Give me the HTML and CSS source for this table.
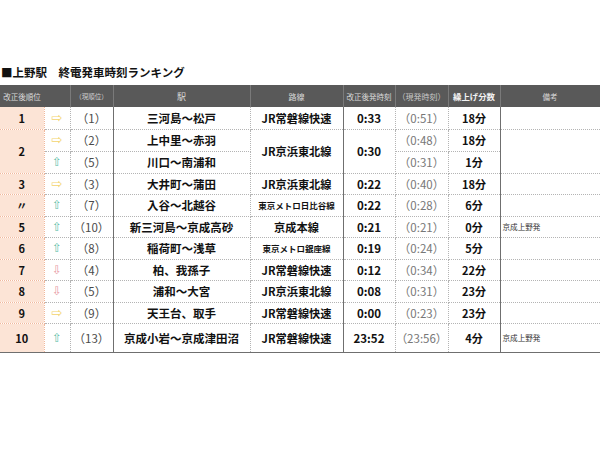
FILE: index.html
```html
<!DOCTYPE html>
<html lang="ja">
<head>
<meta charset="utf-8">
<title>上野駅 終電発車時刻ランキング</title>
<link rel="stylesheet" href="styles.css">
</head>
<body>
<div class="page">
  <h1 class="title">■上野駅　終電発車時刻ランキング</h1>
  <table class="rank">
    <colgroup>
      <col class="c-rank"><col class="c-arrow"><col class="c-prev"><col class="c-sta"><col class="c-line"><col class="c-new"><col class="c-old"><col class="c-diff"><col class="c-note">
    </colgroup>
    <thead>
      <tr>
        <th class="h-rank">改正後順位</th>
        <th class="h-arrow"></th>
        <th class="h-prev sep">（現順位）</th>
        <th class="h-sta">駅</th>
        <th class="h-line sep">路線</th>
        <th class="h-new">改正後発時刻</th>
        <th class="h-old">（現発時刻）</th>
        <th class="h-diff sep">繰上げ分数</th>
        <th class="h-note">備考</th>
      </tr>
    </thead>
    <tbody>
      <tr class="r22">
        <td class="rk">1</td><td class="ar"><span class="a-r">⇨</span></td><td class="pv sep">（1）</td>
        <td class="st">三河島～松戸</td><td class="ln sep">JR常磐線快速</td><td class="nt">0:33</td><td class="ot">（0:51）</td><td class="df sep">18分</td><td class="nb"></td>
      </tr>
      <tr class="r22">
        <td class="rk" rowspan="2">2</td><td class="ar"><span class="a-r">⇨</span></td><td class="pv sep">（2）</td>
        <td class="st">上中里～赤羽</td><td class="ln sep" rowspan="2">JR京浜東北線</td><td class="nt" rowspan="2">0:30</td><td class="ot">（0:48）</td><td class="df sep">18分</td><td class="nb" rowspan="2"></td>
      </tr>
      <tr class="r22">
        <td class="ar"><span class="a-u">⇧</span></td><td class="pv sep">（5）</td>
        <td class="st">川口～南浦和</td><td class="ot">（0:31）</td><td class="df sep">1分</td>
      </tr>
      <tr class="r21">
        <td class="rk">3</td><td class="ar"><span class="a-r">⇨</span></td><td class="pv sep">（3）</td>
        <td class="st">大井町～蒲田</td><td class="ln sep">JR京浜東北線</td><td class="nt">0:22</td><td class="ot">（0:40）</td><td class="df sep">18分</td><td class="nb"></td>
      </tr>
      <tr class="r22">
        <td class="rk">〃</td><td class="ar"><span class="a-u">⇧</span></td><td class="pv sep">（7）</td>
        <td class="st">入谷～北越谷</td><td class="ln sep small">東京メトロ日比谷線</td><td class="nt">0:22</td><td class="ot">（0:28）</td><td class="df sep">6分</td><td class="nb"></td>
      </tr>
      <tr class="r21">
        <td class="rk">5</td><td class="ar"><span class="a-u">⇧</span></td><td class="pv sep">（10）</td>
        <td class="st">新三河島～京成高砂</td><td class="ln sep">京成本線</td><td class="nt">0:21</td><td class="ot">（0:21）</td><td class="df sep">0分</td><td class="nb">京成上野発</td>
      </tr>
      <tr class="r22">
        <td class="rk">6</td><td class="ar"><span class="a-u">⇧</span></td><td class="pv sep">（8）</td>
        <td class="st">稲荷町～浅草</td><td class="ln sep small">東京メトロ銀座線</td><td class="nt">0:19</td><td class="ot">（0:24）</td><td class="df sep">5分</td><td class="nb"></td>
      </tr>
      <tr class="r21">
        <td class="rk">7</td><td class="ar"><span class="a-d">⇩</span></td><td class="pv sep">（4）</td>
        <td class="st">柏、我孫子</td><td class="ln sep">JR常磐線快速</td><td class="nt">0:12</td><td class="ot">（0:34）</td><td class="df sep">22分</td><td class="nb"></td>
      </tr>
      <tr class="r22">
        <td class="rk">8</td><td class="ar"><span class="a-d">⇩</span></td><td class="pv sep">（5）</td>
        <td class="st">浦和～大宮</td><td class="ln sep">JR京浜東北線</td><td class="nt">0:08</td><td class="ot">（0:31）</td><td class="df sep">23分</td><td class="nb"></td>
      </tr>
      <tr class="r21">
        <td class="rk">9</td><td class="ar"><span class="a-r">⇨</span></td><td class="pv sep">（9）</td>
        <td class="st">天王台、取手</td><td class="ln sep">JR常磐線快速</td><td class="nt">0:00</td><td class="ot">（0:23）</td><td class="df sep">23分</td><td class="nb"></td>
      </tr>
      <tr class="r29 last">
        <td class="rk">10</td><td class="ar"><span class="a-u">⇧</span></td><td class="pv sep">（13）</td>
        <td class="st">京成小岩～京成津田沼</td><td class="ln sep">JR常磐線快速</td><td class="nt">23:52</td><td class="ot">（23:56）</td><td class="df sep">4分</td><td class="nb">京成上野発</td>
      </tr>
    </tbody>
  </table>
</div>
</body>
</html>
```
FILE: styles.css
```css
html, body {
  margin: 0;
  padding: 0;
  background: #ffffff;
}
body {
  font-family: "Noto Sans CJK JP", "Noto Sans", sans-serif;
  color: #111;
}
.page {
  width: 600px;
  height: 450px;
  padding-top: 64px;
  box-sizing: border-box;
}
.title {
  margin: 0 0 4px 1px;
  font-size: 11.5px;
  line-height: 17px;
  font-weight: 700;
  color: #111;
  white-space: nowrap;
}
.rank {
  width: 600px;
  border-collapse: collapse;
  table-layout: fixed;
}
.c-rank { width: 44px; }
.c-arrow { width: 26px; }
.c-prev { width: 43px; }
.c-sta { width: 137px; }
.c-line { width: 93px; }
.c-new { width: 52px; }
.c-old { width: 53px; }
.c-diff { width: 52px; }
.c-note { width: 100px; }

th, td {
  padding: 0;
  text-align: center;
  vertical-align: middle;
  white-space: nowrap;
  overflow: hidden;
}
thead tr { height: 22px; }
th {
  background: #595959;
  color: #d9d9d9;
  font-weight: 400;
  font-size: 7.5px;
  border-right: 1px solid #7a7a7a;
}
th.h-rank { border-right: none; }
th.h-prev { font-size: 6.5px; color: #cfcfcf; }
th.h-sta { font-size: 9px; }
th.h-line { font-size: 8px; }
th.h-old { font-size: 8px; color: #c8c8c8; }
th.h-diff { font-size: 8.4px; font-weight: 700; color: #f2f2f2; }
th.h-note { border-right: 1px solid #6a6a6a; }

td {
  border-bottom: 1px dotted #b4b4b4;
  border-right: 1px dotted #b4b4b4;
  font-size: 11.5px;
  line-height: 14px;
}
td.sep { border-right: 1px solid #6f6f6f; }
td.nb { border-right: 1px solid #6f6f6f; }
tr.last td { border-bottom: 1px solid #6f6f6f; }

tr.r22 { height: 22px; }
tr.r21 { height: 21px; }
tr.r29 { height: 29px; }

.rk {
  background: #fce4d6;
  font-weight: 700;
  font-size: 11px;
  color: #111;
  border-right: 1px dotted #f1b89c;
  border-bottom: 1px dotted #f1b89c;
}
.ar {
  font-family: "DejaVu Sans", sans-serif;
  font-size: 12px;
}
.a-r { color: #f3d46e; font-size: 13px; }
.a-u { color: #62bfab; }
.a-d { color: #e79aa5; }
.pv {
  color: #4a4a4a;
  font-size: 11.5px;
}
.st {
  font-weight: 700;
  color: #111;
}
.ln {
  font-weight: 700;
  font-size: 11.2px;
}
.ln.small {
  font-size: 8.5px;
}
.nt {
  font-weight: 700;
  font-size: 11.5px;
}
.ot {
  color: #777;
  font-size: 11.5px;
}
.df {
  font-weight: 700;
  font-size: 11px;
}
.nb {
  text-align: left;
  padding-left: 2px;
  font-size: 7.6px;
  color: #333;
}
```
